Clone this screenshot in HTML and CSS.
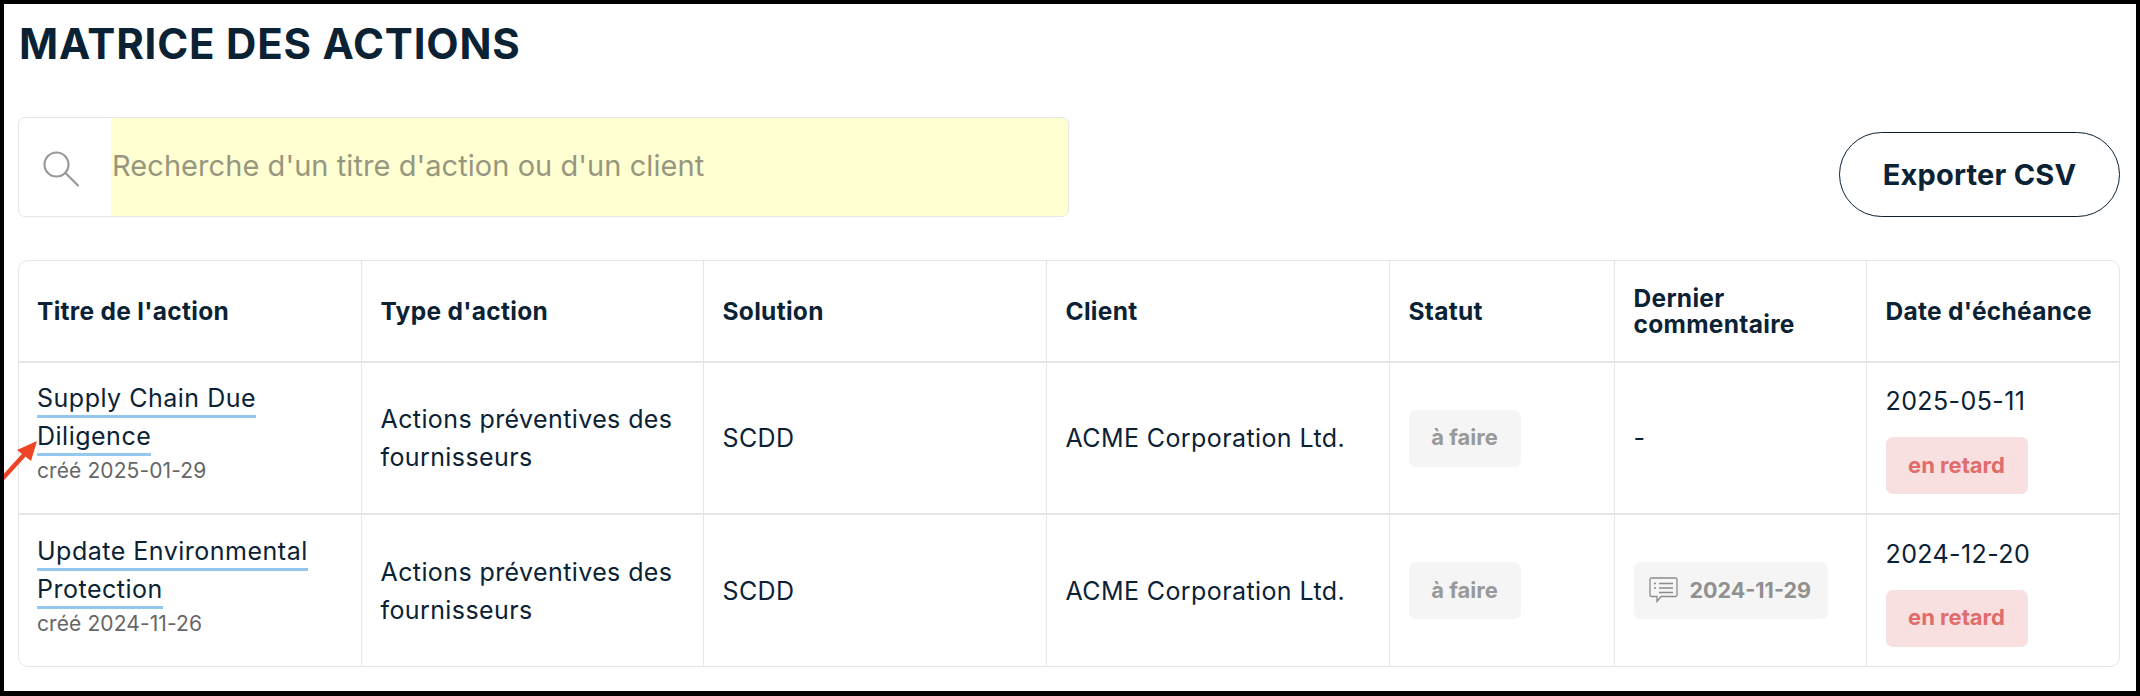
FILE: index.html
```html
<!DOCTYPE html>
<html lang="fr">
<head>
<meta charset="utf-8">
<title>Matrice des actions</title>
<link rel="stylesheet" href="styles.css">
</head>
<body>
<main class="frame">
  <h1 class="title">MATRICE DES ACTIONS</h1>
  <div class="toolbar">
    <div class="search">
      <span class="search-icon">
        <svg width="36" height="36" viewBox="0 0 36 36" fill="none" stroke="#999" stroke-width="2.2" stroke-linecap="round"><circle cx="13.5" cy="13.5" r="12"/><path d="M22.5 22 L35 34.5"/></svg>
      </span>
      <input class="search-input" type="text" placeholder="Recherche d'un titre d'action ou d'un client">
    </div>
    <button class="export" type="button">Exporter CSV</button>
  </div>
  <div class="table-wrap">
    <table class="matrix">
      <colgroup>
        <col class="c-title"><col class="c-type"><col class="c-sol"><col class="c-client"><col class="c-status"><col class="c-comment"><col class="c-date">
      </colgroup>
      <thead>
        <tr>
          <th>Titre de l'action</th>
          <th>Type d'action</th>
          <th>Solution</th>
          <th>Client</th>
          <th>Statut</th>
          <th>Dernier commentaire</th>
          <th>Date d'échéance</th>
        </tr>
      </thead>
      <tbody>
        <tr>
          <td><a class="link" href="#">Supply Chain Due Diligence</a><div class="created">créé 2025-01-29</div></td>
          <td>Actions préventives des fournisseurs</td>
          <td>SCDD</td>
          <td>ACME Corporation Ltd.</td>
          <td><span class="badge">à faire</span></td>
          <td>-</td>
          <td><div class="due">2025-05-11</div><span class="badge late">en retard</span></td>
        </tr>
        <tr>
          <td><a class="link" href="#">Update Environmental Protection</a><div class="created">créé 2024-11-26</div></td>
          <td>Actions préventives des fournisseurs</td>
          <td>SCDD</td>
          <td>ACME Corporation Ltd.</td>
          <td><span class="badge">à faire</span></td>
          <td><span class="badge comment">
            <svg width="29" height="26" viewBox="0 0 29 26" fill="none" stroke="#8c8c8c" stroke-width="1.3"><path d="M2.5 1 H26.5 A1.5 1.5 0 0 1 28 2.5 V18 A1.5 1.5 0 0 1 26.5 19.5 H12 L8 24.5 V19.5 H2.5 A1.5 1.5 0 0 1 1 18 V2.5 A1.5 1.5 0 0 1 2.5 1 Z"/><path d="M10 6.5 H24 M10 11 H24 M10 15.5 H24 M5 6.5 H7 M5 11 H7"/></svg>
            2024-11-29</span></td>
          <td><div class="due">2024-12-20</div><span class="badge late">en retard</span></td>
        </tr>
      </tbody>
    </table>
  </div>
  <svg class="arrow" width="40" height="44" viewBox="0 0 40 44"><path d="M-2 39 L20 15" stroke="#ee4324" stroke-width="4.5" fill="none"/><path d="M33 1 L13 10 L27 21 Z" fill="#ee4324"/></svg>
</main>
</body>
</html>
```

FILE: styles.css
```css
* { box-sizing: border-box; }
html, body { margin: 0; padding: 0; background: #fff; }
body { font-family: Inter, "Liberation Sans", sans-serif; color: #0b2235; }
.frame {
  position: relative;
  width: 2140px;
  height: 696px;
  border: solid #000;
  border-width: 4px 4px 5px 4px;
  padding: 0 16px 0 14px;
  overflow: hidden;
  background: #fff;
}
.title {
  margin: 0;
  height: 113px;
  padding: 16px 0 0 1px;
  font-size: 42px;
  line-height: 48px;
  font-weight: 700;
  letter-spacing: 0.8px;
}
.toolbar { display: flex; align-items: flex-end; justify-content: space-between; }
.search {
  display: flex;
  width: 1051px;
  height: 100px;
  border: 1px solid #e6e6e6;
  border-radius: 7px;
  background: #fff;
  overflow: hidden;
}
.search-icon { flex: 0 0 92px; display: flex; align-items: flex-start; padding: 33px 0 0 24px; }
.search-input {
  flex: 1;
  border: 0;
  outline: 0;
  padding: 0 0 3px 1px;
  background: #ffffd2;
  font: 400 29px Inter, "Liberation Sans", sans-serif;
  letter-spacing: 0.06px;
  color: #97977f;
}
.search-input::placeholder { color: #97977f; opacity: 1; }
.export {
  width: 281px;
  height: 85px;
  background: #fff;
  border: 1px solid #0b2235;
  border-radius: 43px;
  font: 700 29px Inter, "Liberation Sans", sans-serif;
  letter-spacing: 0.2px;
  color: #0b2235;
  padding: 0;
}
.table-wrap {
  margin-top: 43px;
  width: 2102px;
  height: 407px;
  border: 1px solid #e6e6e6;
  border-radius: 10px;
  overflow: hidden;
}
.matrix { width: 2100px; border-collapse: collapse; table-layout: fixed; }
.c-title { width: 342px; }
.c-type { width: 342px; }
.c-sol { width: 343px; }
.c-client { width: 343px; }
.c-status { width: 225px; }
.c-comment { width: 252px; }
.c-date { width: 253px; }
th, td { padding: 0 18px 0 19px; text-align: left; vertical-align: middle; border-left: 1px solid #e6e6e6; }
th:first-child, td:first-child { border-left: 0; padding-left: 18px; }
th { height: 101px; font-size: 24.5px; line-height: 26px; font-weight: 700; letter-spacing: 0.3px; }
td { height: 152px; font-size: 25px; line-height: 38px; letter-spacing: 0.4px; border-top: 2px solid #e6e6e6; }
.link {
  color: #0b2235;
  text-decoration: none;
  letter-spacing: 0.5px;
  padding-bottom: 2px;
  border-bottom: 3px solid #93c9ee;
}
.created { margin-top: 4px; font-size: 21px; line-height: 24px; letter-spacing: 0.1px; color: #666; padding-bottom: 14px; }
.due { line-height: 38px; margin-bottom: 17px; }
.badge {
  display: inline-flex;
  align-items: center;
  justify-content: center;
  width: 112px;
  height: 57px;
  padding-bottom: 2px;
  border-radius: 7px;
  background: #f5f5f5;
  color: #999;
  font-size: 22px;
  line-height: 24px;
  font-weight: 700;
  letter-spacing: 0;
  vertical-align: middle;
}
.comment { width: 194px; gap: 12px; justify-content: flex-start; padding-left: 15px; font-size: 21.5px; color: #909090; }
.late { width: 142px; background: #f8e0e0; color: #e06c6c; }
.arrow { position: absolute; left: 0; top: 436px; }
```
